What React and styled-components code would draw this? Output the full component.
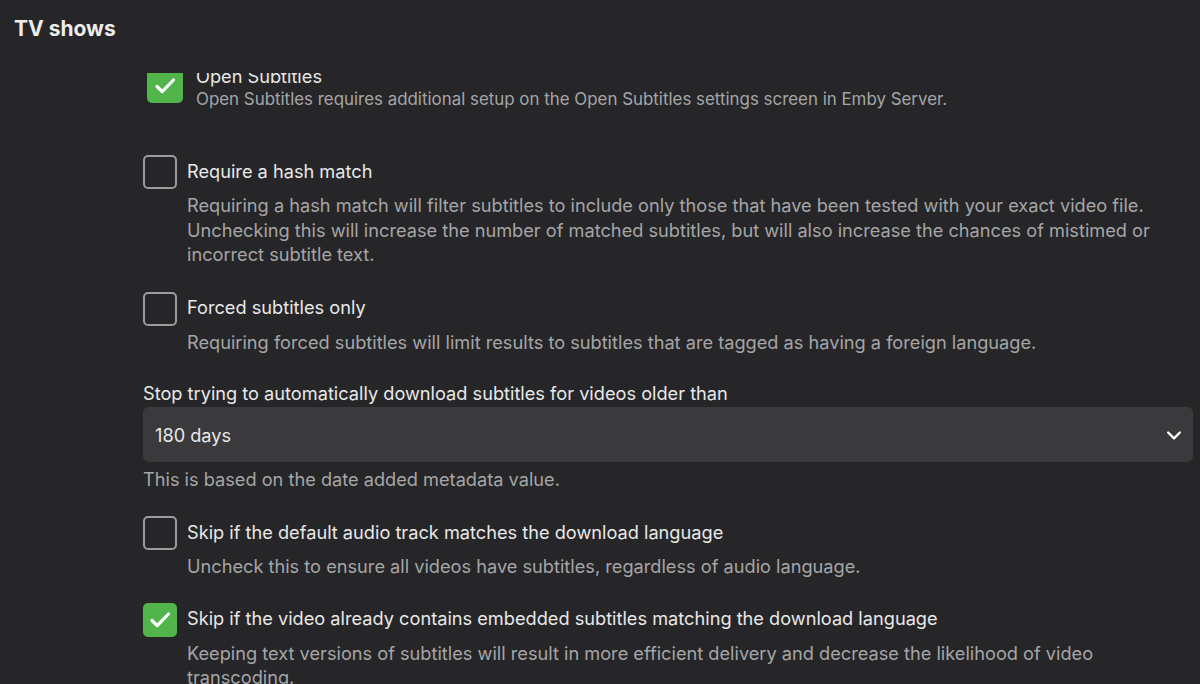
import React from "react";
import styled, { createGlobalStyle } from "styled-components";

const GlobalStyle = createGlobalStyle`
    html, body {
        margin: 0;
        padding: 0;
        background: #262628;
        overflow: hidden;
    }
    body {
        font-family: Inter, "Noto Sans", sans-serif;
        color: #e6e6e6;
    }
`;

const Page = styled.div`
    width: 1200px;
    height: 684px;
    display: flex;
    flex-direction: column;
    background: #262628;
`;

const Header = styled.header`
    height: 73px;
    flex: none;
    padding: 17px 14px 0;
    box-sizing: border-box;
    font-size: 21px;
    line-height: 24px;
    font-weight: 700;
    color: #ececec;
    position: relative;
    z-index: 2;
    background: #262628;
`;

const Main = styled.main`
    flex: 1;
    overflow: hidden;
`;

const Content = styled.div`
    margin-top: -8px;
    padding: 0 7px 0 143px;
    display: flex;
    flex-direction: column;
`;

const Item = styled.div`
    display: flex;
    flex-direction: column;
    margin-bottom: ${(p) => p.$gap || 0}px;
`;

const Row = styled.label`
    display: flex;
    align-items: center;
    gap: 10px;
    height: 34px;
`;

const Box = styled.span`
    flex: none;
    width: ${(p) => (p.$wide ? 36 : 34)}px;
    height: 34px;
    box-sizing: border-box;
    border-radius: 5px;
    display: flex;
    align-items: center;
    justify-content: center;
    margin-top: ${(p) => (p.$wide ? 4 : 0)}px;
    background: ${(p) => (p.$checked ? "#52b54b" : "transparent")};
    border: ${(p) => (p.$checked ? "none" : "2px solid #9b9b9d")};
`;

const Label = styled.span`
    font-size: 18.2px;
    line-height: ${(p) => (p.$tight ? 22 : 24)}px;
    margin-bottom: ${(p) => (p.$tight ? 0 : 3)}px;
    color: #e8e8e8;
`;

const Desc = styled.div`
    font-size: ${(p) => (p.$small ? 16.9 : 18.2)}px;
    line-height: ${(p) => (p.$small ? 24 : 24.5)}px;
    color: #a5a5a7;
    padding-left: ${(p) => (p.$flush ? 0 : 44)}px;
    padding-right: 10px;
    margin-top: ${(p) => (p.$flush ? 0 : 4)}px;
`;

const FirstBlock = styled.div`
    display: flex;
    gap: 13px;
    padding-left: 4px;
    align-items: flex-start;
    margin-bottom: 44px;
`;

const TextCol = styled.div`
    display: flex;
    flex-direction: column;
`;

const SelectLabel = styled.div`
    font-size: 18.2px;
    line-height: 24px;
    color: #e8e8e8;
    margin-bottom: 2px;
`;

const Select = styled.div`
    height: 55px;
    border-radius: 6px;
    background: #3a3a3c;
    display: flex;
    align-items: center;
    justify-content: space-between;
    padding: 0 9px 0 12px;
    font-size: 18.2px;
    color: #e8e8e8;
`;

const Help = styled.div`
    font-size: 18.2px;
    line-height: 24px;
    color: #a5a5a7;
    margin-top: 5px;
    margin-bottom: 25px;
`;

function Check() {
    return (
        <svg width="24" height="24" viewBox="0 0 24 24" fill="none">
            <path
                d="M4 12.5l5.2 5.2L20.5 6"
                stroke="#ffffff"
                strokeWidth="3.2"
                strokeLinecap="round"
                strokeLinejoin="round"
            />
        </svg>
    );
}

function Chevron() {
    return (
        <svg width="20" height="20" viewBox="0 0 24 24" fill="none">
            <path
                d="M5 9l7 7 7-7"
                stroke="#ffffff"
                strokeWidth="2.8"
                strokeLinecap="round"
                strokeLinejoin="round"
            />
        </svg>
    );
}

function CheckItem({ checked, label, children, gap }) {
    return (
        <Item $gap={gap}>
            <Row>
                <Box $checked={checked}>{checked && <Check />}</Box>
                <Label>{label}</Label>
            </Row>
            {children && <Desc>{children}</Desc>}
        </Item>
    );
}

export default function App() {
    return (
        <>
            <GlobalStyle />
            <Page>
                <Header>TV shows</Header>
                <Main>
                    <Content>
                        <FirstBlock>
                            <Box $checked $wide>
                                <Check />
                            </Box>
                            <TextCol>
                                <Label $tight>Open Subtitles</Label>
                                <Desc $small $flush>
                                    Open Subtitles requires additional setup on
                                    the Open Subtitles settings screen in Emby
                                    Server.
                                </Desc>
                            </TextCol>
                        </FirstBlock>
                        <CheckItem label="Require a hash match" gap={25}>
                            Requiring a hash match will filter subtitles to
                            include only those that have been tested with your
                            exact video file. Unchecking this will increase the
                            number of matched subtitles, but will also increase
                            the chances of mistimed or incorrect subtitle text.
                        </CheckItem>
                        <CheckItem label="Forced subtitles only" gap={27}>
                            Requiring forced subtitles will limit results to
                            subtitles that are tagged as having a foreign
                            language.
                        </CheckItem>
                        <SelectLabel>
                            Stop trying to automatically download subtitles for
                            videos older than
                        </SelectLabel>
                        <Select>
                            <span>180 days</span>
                            <Chevron />
                        </Select>
                        <Help>This is based on the date added metadata value.</Help>
                        <CheckItem
                            label="Skip if the default audio track matches the download language"
                            gap={24}
                        >
                            Uncheck this to ensure all videos have subtitles,
                            regardless of audio language.
                        </CheckItem>
                        <CheckItem
                            checked
                            label="Skip if the video already contains embedded subtitles matching the download language"
                        >
                            Keeping text versions of subtitles will result in
                            more efficient delivery and decrease the likelihood
                            of video transcoding.
                        </CheckItem>
                    </Content>
                </Main>
            </Page>
        </>
    );
}
